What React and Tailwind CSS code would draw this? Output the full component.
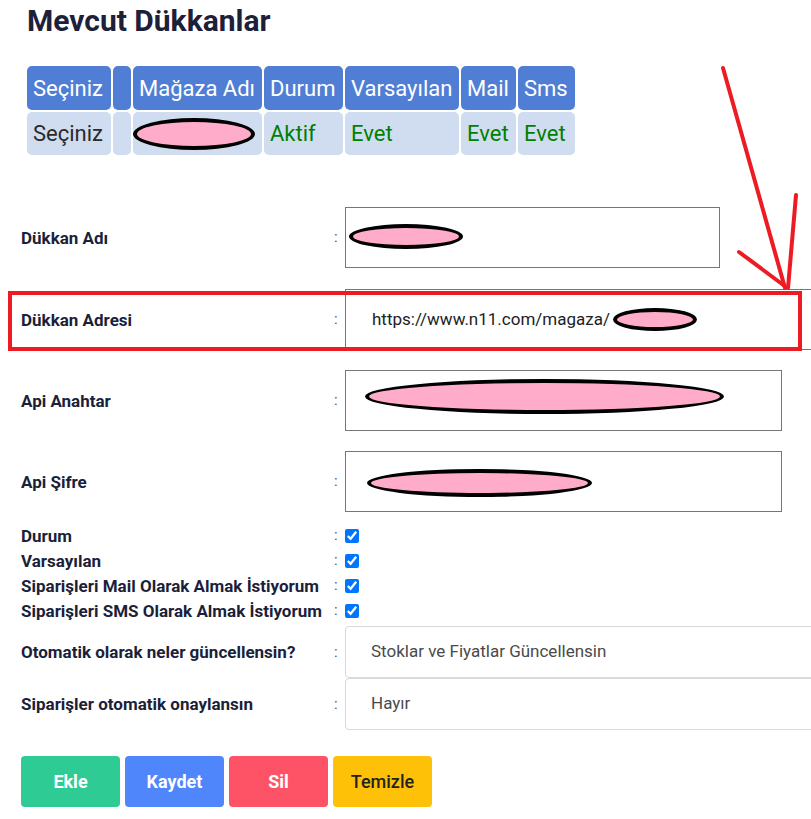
import React from 'react';

const headers = ['Seçiniz', '', 'Mağaza Adı', 'Durum', 'Varsayılan', 'Mail', 'Sms'];

const Blot = ({ className }) => (
  <div className={`absolute rounded-[50%] border-4 border-black bg-[#ffabca] ${className}`} />
);

const Label = ({ children }) => (
  <div className="w-[312px] shrink-0 text-[17px] font-bold leading-[20px] text-[#1b1f3a]">{children}</div>
);

const Colon = () => <div className="w-[12px] shrink-0 pl-[1px] text-[15px] text-[#555]">:</div>;

const TextRow = ({ label, width, value, className = '' }) => (
  <div className={`flex items-center ${className}`}>
    <Label>{label}</Label>
    <Colon />
    <div className={`flex h-[61px] shrink-0 items-center border border-[#767676] bg-white pl-[26px] text-[17px] text-[#222] ${width}`}>
      {value}
    </div>
  </div>
);

const CheckRow = ({ label }) => (
  <div className="flex h-[25px] items-center">
    <Label>{label}</Label>
    <Colon />
    <input type="checkbox" checked readOnly className="m-0 h-[14px] w-[14px] accent-[#0075ff]" />
  </div>
);

const SelectRow = ({ label, value }) => (
  <div className="flex items-center">
    <Label>{label}</Label>
    <Colon />
    <div className="flex h-[52px] w-[480px] shrink-0 items-center rounded-[4px] border border-[#d9d9d9] pl-[25px] text-[17px] text-[#4a4a4a]">
      {value}
    </div>
  </div>
);

export default function App() {
  return (
    <div className="relative h-[819px] w-[811px] overflow-hidden bg-white font-['Roboto',sans-serif]">
      <h1 className="pl-[27px] pt-[3px] text-[30px] font-bold leading-[36px] text-[#1c2039]">Mevcut Dükkanlar</h1>

      <div className="ml-[27px] mt-[27px] grid w-fit grid-cols-[84px_18px_129px_79px_114px_55px_57px] gap-[2px] text-[22px]">
        {headers.map((h, i) => (
          <div key={i} className="flex h-[44px] items-center whitespace-nowrap rounded-[5px] bg-[#507ed4] px-[6px] text-white">
            {h}
          </div>
        ))}
        <div className="flex h-[43px] items-center rounded-[5px] bg-[#d0ddf0] px-[6px] text-[#2a2a2a]">Seçiniz</div>
        <div className="rounded-[5px] bg-[#d0ddf0]" />
        <div className="rounded-[5px] bg-[#d0ddf0]" />
        <div className="flex items-center rounded-[5px] bg-[#d0ddf0] px-[6px] text-[#008000]">Aktif</div>
        <div className="flex items-center rounded-[5px] bg-[#d0ddf0] px-[6px] text-[#008000]">Evet</div>
        <div className="flex items-center rounded-[5px] bg-[#d0ddf0] px-[6px] text-[#008000]">Evet</div>
        <div className="flex items-center rounded-[5px] bg-[#d0ddf0] px-[6px] text-[#008000]">Evet</div>
      </div>

      <div className="mt-[52px] flex flex-col pl-[21px]">
        <TextRow label="Dükkan Adı" width="w-[375px]" />
        <TextRow label="Dükkan Adresi" width="w-[480px]" value="https://www.n11.com/magaza/" className="mt-[21px]" />
        <TextRow label="Api Anahtar" width="w-[437px]" className="mt-[20px]" />
        <TextRow label="Api Şifre" width="w-[437px]" className="mt-[20px]" />

        <div className="mt-[11px] flex flex-col">
          <CheckRow label="Durum" />
          <CheckRow label="Varsayılan" />
          <CheckRow label="Siparişleri Mail Olarak Almak İstiyorum" />
          <CheckRow label="Siparişleri SMS Olarak Almak İstiyorum" />
        </div>

        <div className="mt-[3px] flex flex-col">
          <SelectRow label="Otomatik olarak neler güncellensin?" value="Stoklar ve Fiyatlar Güncellensin" />
          <SelectRow label="Siparişler otomatik onaylansın" value="Hayır" />
        </div>

        <div className="mt-[26px] flex gap-[5px] text-[18px]">
          <button className="h-[51px] w-[99px] rounded-[4px] bg-[#2ecc94] font-bold text-white">Ekle</button>
          <button className="h-[51px] w-[99px] rounded-[4px] bg-[#4f86fb] font-bold text-white">Kaydet</button>
          <button className="h-[51px] w-[99px] rounded-[4px] bg-[#fe5366] font-bold text-white">Sil</button>
          <button className="h-[51px] w-[99px] rounded-[4px] bg-[#ffc107] font-medium text-[#222]">Temizle</button>
        </div>
      </div>

      {/* annotations drawn over the screenshot */}
      <Blot className="left-[133px] top-[118px] h-[32px] w-[122px]" />
      <Blot className="left-[349px] top-[224px] h-[25px] w-[114px]" />
      <Blot className="left-[613px] top-[308px] h-[23px] w-[84px]" />
      <Blot className="left-[365px] top-[379px] h-[35px] w-[359px]" />
      <Blot className="left-[367px] top-[469px] h-[28px] w-[225px]" />

      <div className="absolute left-[8px] top-[291px] h-[60px] w-[794px] border-4 border-[#ed1c24]" />
      <svg className="pointer-events-none absolute left-0 top-0" width="811" height="819">
        <g stroke="#ed1c24" strokeWidth="4" strokeLinecap="round" fill="none">
          <line x1="723" y1="68" x2="785" y2="288" />
          <line x1="796" y1="195" x2="788" y2="288" />
          <line x1="739" y1="252" x2="786" y2="287" />
        </g>
      </svg>
    </div>
  );
}
